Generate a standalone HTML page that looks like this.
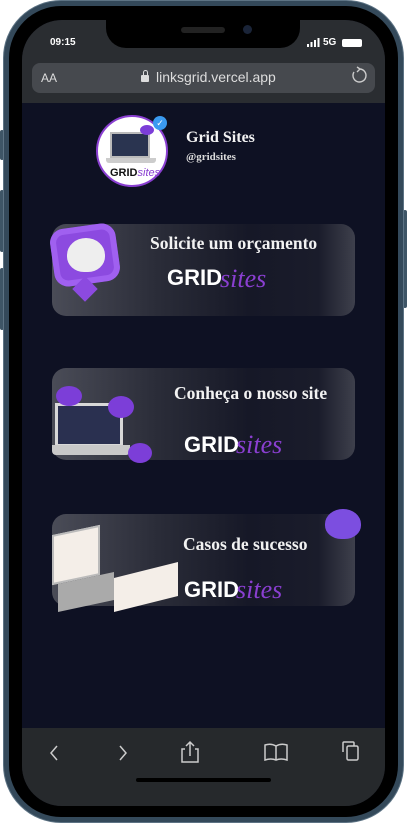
<!DOCTYPE html>
<html><head><meta charset="utf-8"><style>
*{margin:0;padding:0;box-sizing:border-box}
body{width:407px;height:823px;background:#fff;position:relative;overflow:hidden;font-family:"Liberation Sans",sans-serif}
.frame{position:absolute;left:3px;top:0;width:401px;height:823px;border-radius:58px;background:#34495a;border:1px solid #5d7384}
.bezel{position:absolute;left:9px;top:6px;width:389px;height:811px;border-radius:52px;background:#000}
.screen{position:absolute;left:22px;top:20px;width:363px;height:786px;border-radius:40px;overflow:hidden;background:#0e1123}
.top{position:absolute;left:0;top:0;width:363px;height:83px;background:#2a2d31}
.notch{position:absolute;left:84px;top:-2px;width:194px;height:30px;background:#000;border-radius:0 0 20px 20px}
.bot{position:absolute;left:0;top:708px;width:363px;height:78px;background:#26292c}
.btn{position:absolute;background:#3e5566;border-radius:2px}
.card{position:absolute;left:30px;width:303px;height:92px;border-radius:14px;background:linear-gradient(90deg,#4a4c57 0%,#2a2c38 35%,#161827 65%,#1a1c2b 88%,#3e404c 100%)}
.t{position:absolute;color:#f2f2f2;font-family:"Liberation Serif",serif;font-weight:bold;font-size:17.5px;white-space:nowrap}
.g{position:absolute;color:#fff;font-weight:bold;font-size:22px}
.s{position:absolute;color:#8a3fd1;font-family:"Liberation Serif",serif;font-style:italic;font-size:26px}
</style></head><body>
<div class="btn" style="left:0;top:130px;width:4px;height:30px"></div>
<div class="btn" style="left:0;top:190px;width:4px;height:62px"></div>
<div class="btn" style="left:0;top:268px;width:4px;height:62px"></div>
<div class="btn" style="left:403px;top:210px;width:4px;height:98px"></div>
<div class="frame"></div><div class="bezel"></div>
<div class="screen">
 <div class="top">
  <div class="notch"><div style="position:absolute;left:75px;top:9px;width:44px;height:6px;border-radius:3px;background:#222"></div><div style="position:absolute;left:137px;top:7px;width:9px;height:9px;border-radius:50%;background:#1a2438"></div></div>
  <div style="position:absolute;left:28px;top:17px;color:#fff;font-size:10px;font-weight:bold">09:15</div>
  <svg style="position:absolute;left:285px;top:18px" width="14" height="9"><rect x="0" y="6" width="2" height="3" fill="#fff"/><rect x="3.5" y="4" width="2" height="5" fill="#fff"/><rect x="7" y="2" width="2" height="7" fill="#fff"/><rect x="10.5" y="0" width="2" height="9" fill="#fff"/></svg>
  <div style="position:absolute;left:301px;top:17px;color:#fff;font-size:10px;font-weight:bold">5G</div>
  <div style="position:absolute;left:320px;top:19px;width:20px;height:8px;border-radius:2px;background:#fff"></div>
  <div style="position:absolute;left:10px;top:43px;width:343px;height:30px;border-radius:8px;background:#46494e"></div>
  <div style="position:absolute;left:19px;top:51px;color:#ddd;font-size:12px">AA</div>
  <div style="position:absolute;left:119px;top:55px;width:8px;height:7px;background:#ddd;border-radius:1px"></div>
  <div style="position:absolute;left:120.5px;top:50px;width:5px;height:7px;border:1.3px solid #ddd;border-bottom:none;border-radius:3px 3px 0 0"></div>
  <div style="position:absolute;left:134px;top:49px;color:#ddd;font-size:14px">linksgrid.vercel.app</div>
  <svg style="position:absolute;left:328px;top:46px" width="18" height="18" fill="none" stroke="#ccc" stroke-width="1.4"><path d="M10 3 A6.5 6.5 0 1 1 4 6"/><path d="M7 1 L10 3 L7 6"/></svg>
 </div>
 <div style="position:absolute;left:74px;top:95px;width:72px;height:72px;border-radius:50%;background:#fff;border:2px solid #8a3fd1"></div>
 <div style="position:absolute;left:88px;top:112px;width:40px;height:26px;background:#2a3450;border:2px solid #bbb"></div>
 <div style="position:absolute;left:84px;top:138px;width:50px;height:5px;background:#ccc;border-radius:0 0 3px 3px"></div>
 <div style="position:absolute;left:88px;top:147px;font-size:11px;font-weight:bold;color:#111">GRID<span style="color:#8a3fd1;font-style:italic;font-weight:normal">sites</span></div>
 <div style="position:absolute;left:118px;top:105px;width:14px;height:10px;border-radius:50%;background:#7c3ed8"></div>
 <div style="position:absolute;left:131px;top:96px;width:14px;height:14px;border-radius:50%;background:#3a9af0;color:#fff;font-size:9px;text-align:center;line-height:14px">✓</div>
 <div class="t" style="left:164px;top:109px;font-size:16px">Grid Sites</div>
 <div class="t" style="left:164px;top:131px;font-size:11px;color:#ddd">@gridsites</div>

 <div class="card" style="top:204px"></div>
 <div style="position:absolute;left:30px;top:206px;width:66px;height:58px;border-radius:14px;background:#8c4ae0;transform:rotate(-8deg);box-shadow:inset 0 0 0 6px #a060f0"></div>
 <div style="position:absolute;left:54px;top:260px;width:18px;height:18px;background:#8c4ae0;transform:rotate(45deg)"></div>
 <div style="position:absolute;left:45px;top:218px;width:38px;height:34px;border-radius:50% 50% 45% 45%;background:#eee"></div>
 <div class="t" style="left:128px;top:213px">Solicite um orçamento</div>
 <div class="g" style="left:145px;top:245px">GRID</div><div class="s" style="left:198px;top:244px">sites</div>

 <div class="card" style="top:348px"></div>
 <div style="position:absolute;left:33px;top:383px;width:68px;height:44px;background:#2a3050;border:3px solid #d8d8d8"></div>
 <div style="position:absolute;left:30px;top:425px;width:78px;height:10px;background:#c8c8c8;border-radius:0 0 4px 4px"></div>
 <div style="position:absolute;left:34px;top:366px;width:26px;height:20px;border-radius:50%;background:#7c3ed8"></div>
 <div style="position:absolute;left:86px;top:376px;width:26px;height:22px;border-radius:50%;background:#7c3ed8"></div>
 <div style="position:absolute;left:106px;top:423px;width:24px;height:20px;border-radius:50%;background:#7c3ed8"></div>
 <div class="t" style="left:152px;top:363px">Conheça o nosso site</div>
 <div class="g" style="left:162px;top:412px">GRID</div><div class="s" style="left:214px;top:410px">sites</div>

 <div class="card" style="top:494px"></div>
 <div style="position:absolute;left:30px;top:510px;width:48px;height:50px;background:#f4eee8;transform:skewY(-12deg);border:2px solid #bbb"></div>
 <div style="position:absolute;left:36px;top:558px;width:56px;height:28px;background:#aaa;transform:skewY(-12deg)"></div>
 <div style="position:absolute;left:92px;top:550px;width:64px;height:34px;background:#f4eee8;transform:skewY(-14deg)"></div>
 <div style="position:absolute;left:303px;top:489px;width:36px;height:30px;border-radius:50% 50% 45% 45%;background:#7c4ee0"></div>
 <div class="t" style="left:161px;top:514px">Casos de sucesso</div>
 <div class="g" style="left:162px;top:557px">GRID</div><div class="s" style="left:214px;top:555px">sites</div>

 <div class="bot">
  <svg width="363" height="78" style="position:absolute;left:0;top:0" fill="none" stroke="#ccc" stroke-width="1.5">
   <path d="M35 18 L29 25 L35 32"/>
   <path d="M98 18 L104 25 L98 32"/>
   <path d="M163 21 H160 V34 H176 V21 H173 M168 28 V14 M164 18 L168 14 L172 18"/>
   <path d="M243 17 Q249 15 254 18 Q259 15 265 17 V32 Q259 30 254 32 Q249 30 243 32 Z M254 18 V32"/>
   <path d="M321 24 V15 Q321 14 322 14 H331 Q332 14 332 15 V18"/><rect x="325" y="18" width="11" height="14" rx="1.5"/>
  </svg>
  <div style="position:absolute;left:114px;top:50px;width:135px;height:4px;border-radius:2px;background:#000"></div>
 </div>
</div>
</body></html>
